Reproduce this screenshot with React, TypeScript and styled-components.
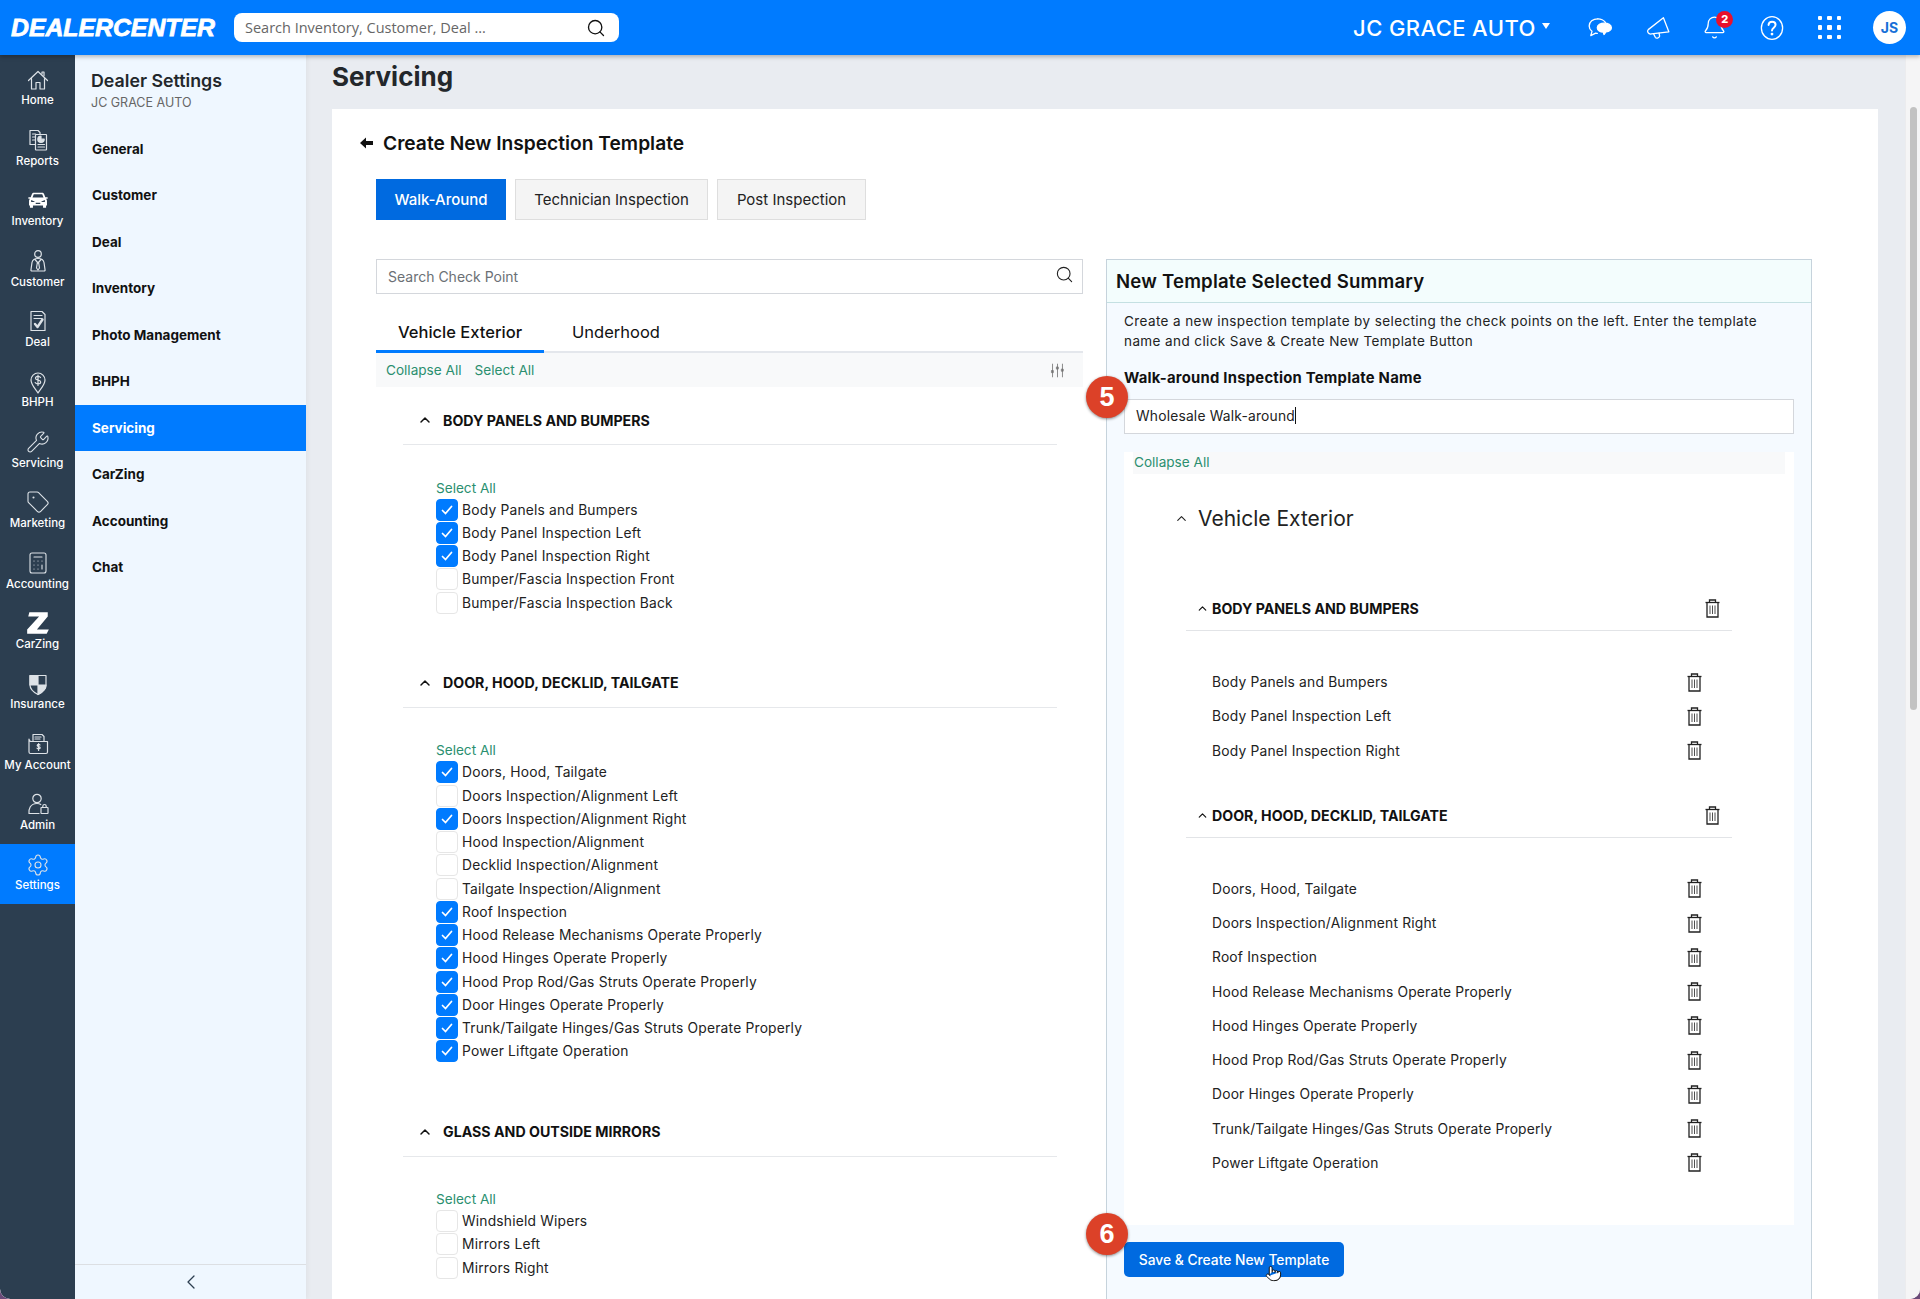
import React from "react";
import styled, { createGlobalStyle } from "styled-components";
import { Bell, Calculator, ChevronLeft, ChevronUp, Search, Settings, Tag, Wrench, Pointer } from "lucide-react";

const GlobalStyle = createGlobalStyle`
  html, body {
    margin: 0;
    padding: 0;
    background: #6b4a78;
  }
  * {
    box-sizing: border-box;
  }
  body {
    font-family: Inter, "Liberation Sans", sans-serif;
    color: #111;
  }
`;

const Shell = styled.div`
  width: 1920px;
  height: 1299px;
  display: flex;
  flex-direction: column;
  overflow: hidden;
  border-radius: 0 0 10px 10px;
  background: #e9ecf1;
`;

const TopBar = styled.header`
  height: 55px;
  flex: none;
  display: flex;
  align-items: center;
  padding: 0 14px 0 11px;
  background: #007bff;
  box-shadow: 0 2px 4px rgba(0, 0, 0, 0.25);
  position: relative;
  z-index: 2;
`;

const Logo = styled.div`
  width: 204px;
  font-family: "Liberation Sans", sans-serif;
  font-weight: 700;
  font-style: italic;
  font-size: 24.8px;
  color: #fff;
  -webkit-text-stroke: 0.8px #fff;
  white-space: nowrap;
`;

const GlobalSearch = styled.div`
  width: 385px;
  height: 29px;
  margin-left: 19px;
  display: flex;
  align-items: center;
  justify-content: space-between;
  padding: 0 13px 0 11px;
  border-radius: 8px;
  background: #fff;
  font-family: "Open Sans", sans-serif;
  font-size: 14.5px;
  color: #666;
`;

const Dealer = styled.div`
  margin-left: auto;
  display: flex;
  align-items: center;
  gap: 6px;
  font-size: 22px;
  font-weight: 500;
  letter-spacing: 0.4px;
  color: #fff;
  margin-right: 22px;
`;

const Caret = styled.span`
  width: 0;
  height: 0;
  border-left: 4.5px solid transparent;
  border-right: 4.5px solid transparent;
  border-top: 6px solid #fff;
  margin-bottom: 4px;
`;

const TopIcon = styled.div`
  width: 57.25px;
  height: 32px;
  display: flex;
  align-items: center;
  justify-content: center;
  position: relative;
  color: #fff;
`;

const NotifyBadge = styled.span`
  position: absolute;
  top: -1px;
  left: 30px;
  width: 17px;
  height: 17px;
  border-radius: 50%;
  background: #e8112d;
  color: #fff;
  font-size: 11px;
  font-weight: 800;
  display: flex;
  align-items: center;
  justify-content: center;
`;

const Dots = styled.div`
  display: grid;
  grid-template-columns: repeat(3, 4.5px);
  gap: 5px;
`;

const Dot = styled.i`
  width: 4.5px;
  height: 4.5px;
  border-radius: 1px;
  background: #fff;
`;

const Avatar = styled.div`
  width: 33px;
  height: 33px;
  margin-left: 15px;
  border-radius: 50%;
  background: #fff;
  color: #1670d8;
  font-size: 14px;
  font-weight: 700;
  display: flex;
  align-items: center;
  justify-content: center;
`;

const Body = styled.div`
  flex: 1;
  min-height: 0;
  display: flex;
`;

const Rail = styled.nav`
  width: 75px;
  flex: none;
  padding-top: 3.6px;
  background: #2c3e50;
  border-bottom-left-radius: 10px;
`;

const RailItem = styled.div<{ $active?: boolean }>`
  height: 60.4px;
  padding-top: 8px;
  display: flex;
  flex-direction: column;
  align-items: center;
  background: ${({ $active }) => ($active ? "#007bff" : "transparent")};
  color: #dde2e7;
`;

const RailIcon = styled.div`
  height: 26px;
  display: flex;
  align-items: center;
  justify-content: center;
`;

const RailLabel = styled.div`
  margin-top: 0.8px;
  font-size: 11.5px;
  font-weight: 500;
  line-height: 14.6px;
  color: #fff;
  white-space: nowrap;
`;

const SubNav = styled.aside`
  width: 231px;
  flex: none;
  display: flex;
  flex-direction: column;
  background: #eff7ff;
  box-shadow: 2px 0 4px rgba(0, 0, 0, 0.04);
`;

const SubHead = styled.div`
  height: 69px;
  padding: 15px 0 0 16px;
`;

const SubTitle = styled.div`
  font-size: 17.8px;
  font-weight: 600;
  line-height: 22px;
  color: #23272b;
`;

const SubCaption = styled.div`
  font-size: 12.5px;
  line-height: 22px;
  color: #666;
`;

const SubList = styled.div`
  flex: 1;
  padding-top: 1.5px;
`;

const SubItem = styled.div<{ $active?: boolean }>`
  height: 46.5px;
  display: flex;
  align-items: center;
  padding-left: 17px;
  font-size: 13.5px;
  font-weight: 700;
  color: ${({ $active }) => ($active ? "#fff" : "#111")};
  background: ${({ $active }) => ($active ? "#007bff" : "transparent")};
`;

const CollapseRow = styled.div`
  height: 35px;
  flex: none;
  display: flex;
  align-items: center;
  justify-content: center;
  border-top: 1px solid #dcdfe3;
  color: #2c3e50;
`;

const Main = styled.main`
  flex: 1;
  min-width: 0;
  padding-left: 26px;
`;

const PageTitle = styled.h1`
  height: 54px;
  margin: 0;
  font-size: 26px;
  font-weight: 700;
  line-height: 43px;
  color: #23272b;
`;

const Panel = styled.section`
  width: 1546px;
  height: 1190px;
  padding-top: 20px;
  background: #fff;
  overflow: hidden;
`;

const Heading = styled.div`
  height: 28px;
  padding-left: 28px;
  display: flex;
  align-items: center;
  gap: 10px;
  font-size: 19.2px;
  font-weight: 600;
  color: #111;
`;

const TemplateTabs = styled.div`
  display: flex;
  gap: 9px;
  margin: 22px 0 39px 44px;
`;

const TemplateTab = styled.div<{ $active?: boolean; $width: number }>`
  width: ${({ $width }) => $width}px;
  height: 41px;
  display: flex;
  align-items: center;
  justify-content: center;
  font-size: 15px;
  font-weight: ${({ $active }) => ($active ? 500 : 400)};
  color: ${({ $active }) => ($active ? "#fff" : "#222")};
  background: ${({ $active }) => ($active ? "#006ae0" : "#f4f4f4")};
  border: ${({ $active }) => ($active ? "none" : "1.5px solid #dedede")};
`;

const Columns = styled.div`
  display: grid;
  grid-template-columns: 707px 706px;
  column-gap: 23px;
  margin-left: 44px;
`;

const CheckSearch = styled.div`
  height: 35px;
  display: flex;
  align-items: center;
  justify-content: space-between;
  padding: 0 8px 0 11px;
  border: 1.5px solid #d4d7dc;
  font-size: 14px;
  color: #6b7075;
`;

const SearchGlyph = styled.span`
  display: flex;
  margin: 0 0 4px 0;
  color: #222;
`;

const SectionTabs = styled.div`
  height: 59px;
  display: flex;
  align-items: flex-end;
  gap: 6px;
  border-bottom: 2px solid #e4e7ec;
`;

const SectionTab = styled.div<{ $active?: boolean }>`
  height: 39px;
  margin-bottom: -2px;
  padding: 0 22px;
  display: flex;
  align-items: center;
  font-size: 16.5px;
  font-weight: ${({ $active }) => ($active ? 500 : 400)};
  border-bottom: 3px solid ${({ $active }) => ($active ? "#007bff" : "transparent")};
`;

const ToolBar = styled.div`
  height: 34px;
  display: flex;
  align-items: center;
  gap: 13px;
  padding: 0 17px 0 10px;
  background: #f8f9fa;
`;

const GreenLink = styled.span`
  font-size: 13.6px;
  color: #2b8f6f;
`;

const ToolEnd = styled.div`
  margin-left: auto;
  display: flex;
  color: #777;
`;

const Groups = styled.div`
  padding: 11px 26px 0 27px;
`;

const GroupHead = styled.div`
  height: 47px;
  padding: 0 0 2px 14px;
  display: flex;
  align-items: center;
  gap: 10px;
  border-bottom: 1.5px solid #e6e8eb;
  font-size: 14.2px;
  font-weight: 700;
  color: #111;
`;

const CheckList = styled.div`
  padding-left: 33px;
  padding-bottom: 46.5px;
`;

const SelectLine = styled.div`
  height: 21px;
  margin-top: 32px;
  display: flex;
  align-items: center;
`;

const CheckRow = styled.div`
  height: 23.25px;
  display: flex;
  align-items: center;
  gap: 4px;
  font-size: 13.8px;
  letter-spacing: 0.2px;
  color: #222;
`;

const CheckBox = styled.span<{ $checked: boolean }>`
  width: 22px;
  height: 22px;
  flex: none;
  display: flex;
  align-items: center;
  justify-content: center;
  border-radius: 4px;
  background: ${({ $checked }) => ($checked ? "#007bff" : "#fff")};
  border: 1px solid ${({ $checked }) => ($checked ? "#007bff" : "#e6e6e6")};
`;

const Summary = styled.div`
  height: 1060px;
  border: 1px solid #c6d3dc;
  border-bottom: none;
  background: #f5faff;
`;

const SummaryHead = styled.div`
  height: 43px;
  padding-left: 9px;
  display: flex;
  align-items: center;
  border-bottom: 1px solid #c4e0e2;
  background: #f3fdfd;
  font-size: 18.6px;
  font-weight: 600;
  letter-spacing: 0.2px;
  color: #111;
`;

const SummaryBody = styled.div`
  padding: 8px 17px 0;
`;

const Intro = styled.p`
  margin: 0;
  font-size: 13.5px;
  line-height: 20px;
  letter-spacing: 0.4px;
  white-space: nowrap;
  color: #222;
`;

const FieldLabel = styled.div`
  margin-top: 17px;
  font-size: 14.8px;
  font-weight: 700;
  letter-spacing: 0.25px;
  line-height: 20px;
  color: #111;
`;

const FieldWrap = styled.div`
  position: relative;
  margin-top: 11px;
`;

const NameField = styled.div`
  height: 35px;
  display: flex;
  align-items: center;
  padding: 0 0 2px 11px;
  border: 1.5px solid #d4d7dc;
  background: #fff;
  font-size: 13.8px;
  letter-spacing: 0.2px;
  color: #222;
`;

const TextCaret = styled.i`
  width: 1px;
  height: 17px;
  background: #111;
`;

const StepBadge = styled.div<{ $top: number }>`
  position: absolute;
  left: -38px;
  top: ${({ $top }) => $top}px;
  width: 42px;
  height: 42px;
  border-radius: 50%;
  display: flex;
  align-items: center;
  justify-content: center;
  background: #dc4128;
  box-shadow: 0 1px 3px rgba(0, 0, 0, 0.45);
  color: #fff;
  font-family: "Liberation Sans", sans-serif;
  font-size: 27px;
  font-weight: 700;
`;

const SelectedBox = styled.div`
  margin-top: 18px;
  padding-bottom: 45px;
  background: #fff;
`;

const CollapseBar = styled.div`
  height: 22px;
  margin: 0 9px;
  padding: 0 0 2px 1px;
  display: flex;
  align-items: center;
  background: #f8f9fa;
`;

const SectionName = styled.div`
  height: 30px;
  margin: 29px 0 55px;
  padding-left: 50px;
  display: flex;
  align-items: center;
  gap: 9px;
  font-size: 21px;
  color: #222;
`;

const SelectedGroup = styled.div`
  margin: 0 62px 27px;
  &:last-child {
    margin-bottom: 0;
  }
`;

const SelectedHead = styled.div`
  height: 43px;
  padding: 0 12px 1px 10px;
  display: flex;
  align-items: center;
  gap: 3px;
  border-bottom: 1.5px solid #e2e4e7;
  font-size: 14.2px;
  font-weight: 700;
  color: #111;
`;

const HeadTrash = styled.div`
  margin-left: auto;
  display: flex;
`;

const SelectedList = styled.div`
  margin-top: 34px;
`;

const SelectedRow = styled.div`
  height: 34.25px;
  padding: 0 30px 0 26px;
  display: flex;
  align-items: center;
  justify-content: space-between;
  font-size: 13.8px;
  letter-spacing: 0.2px;
  color: #222;
`;

const SaveWrap = styled.div`
  position: relative;
  margin-top: 17px;
  width: 220px;
`;

const SaveButton = styled.div`
  height: 35px;
  display: flex;
  align-items: center;
  justify-content: center;
  border-radius: 5px;
  background: #006ae0;
  color: #fff;
  font-size: 13.8px;
  font-weight: 500;
`;

const HandCursor = styled.div`
  position: absolute;
  left: 141px;
  top: 23px;
  display: flex;
  color: #111;
`;

const ScrollTrack = styled.div`
  width: 15px;
  flex: none;
  padding: 52px 3px 0 4px;
  background: #f5f5f6;
  border-left: 1px solid #ececee;
`;

const ScrollThumb = styled.div`
  height: 603px;
  border-radius: 4px;
  background: #c2c2c2;
`;

const Line = styled.svg.attrs({ viewBox: "0 0 24 24", fill: "none", stroke: "currentColor", strokeWidth: 1.2 })<{ $size?: number }>`
  width: ${({ $size }) => $size ?? 24}px;
  height: ${({ $size }) => $size ?? 24}px;
  stroke-linecap: round;
  stroke-linejoin: round;
`;

const HomeIcon = () => (
  <Line>
    <path d="M2.500 12.500 12 3.500l9.500 9" />
    <path d="M5.500 10.500V21H10v-6.500h4V21h4.500V10.500" />
    <path d="M16 6V4h2v3.800" />
  </Line>
);

const ReportsIcon = () => (
  <Line>
    <path d="M4 2.500h8l2 2v2M4 2.500v14h5" />
    <path d="M6.500 6h3M6.500 9h2.500M6.500 12h2.500" />
    <rect x="9.500" y="6.500" width="11" height="15.500" rx="0.500" />
    <path d="M15 8a3.200 3.200 0 1 0 3.200 3.200H15z" fill="currentColor" />
    <path d="M12 16.500h6.500M12 19h6.500" />
  </Line>
);

const CarIcon = () => (
  <svg width="22" height="22" viewBox="0 0 24 24" fill="#fff">
    <path
      fillRule="evenodd"
      d="M7.500 4h9c1 0 1.700.5 2.100 1.500L20 9h2.500v1.500h-1.800c.7.6 1.100 1.300 1.100 2.200V18h-1v2.500h-3.300V18H6.500v2.500H3.200V18h-1v-5.300c0-.9.4-1.600 1.100-2.200H1.500V9H4l1.400-3.500C5.800 4.500 6.500 4 7.500 4zM7.400 5.700 6 9.300h12l-1.400-3.600zM4.500 12v2.300h3.800V13.500zM19.500 12l-3.800 1.500v.8h3.800zM9.500 15v1.300h5V15z"
    />
  </svg>
);

const CustomerIcon = () => (
  <Line>
    <circle cx="12" cy="5" r="3.300" />
    <path d="M6 22c-1 0-1.200-.5-1-1.500l1-7c.5-2.500 2.500-4 6-4s5.500 1.500 6 4l1 7c.2 1-0 1.500-1 1.500z" />
    <path d="M9 10.500 12 14l3-3.500M11.300 14l-.8 5 1.500 2 1.500-2-.8-5" />
  </Line>
);

const DealIcon = () => (
  <Line>
    <path d="M5 2.500h11l3 3v16H5z" />
    <path d="M8 6.500h8M8 9.500h8" />
    <path d="m9 15 2.500 3 5-7.500" strokeWidth="2.400" />
  </Line>
);

const PinIcon = () => (
  <Line>
    <path d="M12 23c-2-3.500-7-8-7-13a7 7 0 0 1 14 0c0 5-5 9.500-7 13z" />
    <path d="M14.500 7.500c-.5-1-1.500-1.200-2.500-1.200-1.300 0-2.500.7-2.500 1.900 0 2.600 5.200 1.300 5.200 3.900 0 1.200-1.300 1.900-2.700 1.900-1.200 0-2.300-.4-2.800-1.400M12 5v10.500" />
  </Line>
);

const InsuranceIcon = () => (
  <Line>
    <path d="M4 3.500h16v9.500c0 4.500-4 7.500-8 9.500-4-2-8-5-8-9.500z" />
    <path d="M4 3.500h8V13H4z" fill="currentColor" />
    <path d="M12 13h8c0 4.500-4 7.500-8 9.500z" fill="currentColor" />
  </Line>
);

const ZIcon = () => (
  <svg width="26" height="26" viewBox="0 0 24 24" fill="#fff">
    <polygon points="4,2 21,2 21,6 11,18 22,18 20,22 2,22 2,18 13,6 3,6" />
  </svg>
);

const AccountIcon = () => (
  <Line>
    <path d="M7 8.500V2.500h9l2 2v4" />
    <path d="M9 5h6M9 7h5" />
    <path d="M3 7v13c0 1 .5 1.500 1.500 1.500H20c1 0 1.500-.5 1.500-1.500V9.500H5.500C4 9.500 3 8.500 3 7z" />
    <path d="M14 13c-.5-.8-2.800-.9-2.800.4 0 1.500 3 .9 3 2.400 0 1.300-2.500 1.200-3.200.3M12.600 11.500v7" />
  </Line>
);

const AdminIcon = () => (
  <Line>
    <circle cx="11" cy="6.500" r="4.200" />
    <path d="M3 21.500c-.5-4 1-10 8-10 1.500 0 2.800.3 3.800 1M3 21.500h10" />
    <rect x="15" y="15.500" width="7" height="6" rx="0.500" />
    <path d="M16.800 15.500v-1.300a1.700 1.700 0 0 1 3.400 0v1.300" />
  </Line>
);

const ChatIcon = () => (
  <Line $size={26}>
    <path d="M10 3.500c-4.500 0-8 2.800-8 6.700 0 2 1 3.700 2.600 4.900L3.500 19l4.500-2.200c.5.100 1 .2 1.500.2" />
    <path d="M10 3.500c3 0 5.500 1.300 7 3.300" />
    <path d="M16 7.500c-3.500 0-6.500 1.700-6.500 4.200 0 2.400 2.800 4.100 5.500 4.100l.7 2.200 1.800-2.400c2.700-.5 5-1.900 5-3.900 0-2.500-3-4.200-6.500-4.200z" fill="currentColor" />
  </Line>
);

const MegaphoneIcon = () => (
  <Line $size={26}>
    <path d="M3 13.500 17 2.500l5 13-16 2c-3 .5-4.500-2.500-3-4z" />
    <path d="M8 17.500l1.500 3c.8 1.500 3.500 1 4-1l-.5-2.800" />
  </Line>
);

const HelpIcon = () => (
  <Line $size={26}>
    <ellipse cx="12" cy="12" rx="9.800" ry="10.500" />
    <path d="M8.800 9.200c.2-2 1.600-3 3.300-3 1.800 0 3.200 1.200 3.200 2.900 0 2.500-3.300 2.700-3.300 5.200" strokeWidth="1.800" />
    <circle cx="12" cy="17.600" r="0.700" fill="currentColor" />
  </Line>
);

const SliderIcon = () => (
  <Line $size={17}>
    <path d="M5 3v18M12 3v18M19 3v18" />
    <rect x="4" y="12" width="2" height="3" fill="currentColor" />
    <rect x="11" y="7" width="2" height="3" fill="currentColor" />
    <rect x="18" y="10" width="2" height="3" fill="currentColor" />
  </Line>
);

const BackArrow = () => (
  <svg width="13" height="12" viewBox="0 0 13 12" fill="#111">
    <polygon points="0,6 6,0.500 6,4 13,4 13,8 6,8 6,11.500" />
  </svg>
);

const TrashIcon = () => (
  <svg width="15" height="19" viewBox="0 0 15 19" fill="none" stroke="#222" strokeWidth="1.300">
    <path d="M.5 3.500h14" />
    <path d="M4.500 3.500V1h6v2.500" />
    <path d="M2 3.500V18h11V3.500" />
    <path d="M5 6.500v8.500M7.500 6.500v8.500M10 6.500v8.500" strokeWidth="0.800" />
  </svg>
);

const TickIcon = () => (
  <svg width="14" height="14" viewBox="0 0 14 14" fill="none" stroke="#fff" strokeWidth="1.700" strokeLinecap="round">
    <path d="m2.500 7.500 3 3 6-7" />
  </svg>
);

const railItems = [
  { label: "Home", icon: <HomeIcon /> },
  { label: "Reports", icon: <ReportsIcon /> },
  { label: "Inventory", icon: <CarIcon /> },
  { label: "Customer", icon: <CustomerIcon /> },
  { label: "Deal", icon: <DealIcon /> },
  { label: "BHPH", icon: <PinIcon /> },
  { label: "Servicing", icon: <Wrench size={24} strokeWidth={1.1} /> },
  { label: "Marketing", icon: <Tag size={24} strokeWidth={1.1} /> },
  { label: "Accounting", icon: <Calculator size={24} strokeWidth={1.1} /> },
  { label: "CarZing", icon: <ZIcon /> },
  { label: "Insurance", icon: <InsuranceIcon /> },
  { label: "My Account", icon: <AccountIcon /> },
  { label: "Admin", icon: <AdminIcon /> },
  { label: "Settings", icon: <Settings size={24} strokeWidth={1.1} />, active: true },
];

const subItems = ["General", "Customer", "Deal", "Inventory", "Photo Management", "BHPH", "Servicing", "CarZing", "Accounting", "Chat"];

const checkGroups = [
  {
    title: "BODY PANELS AND BUMPERS",
    rows: [
      ["Body Panels and Bumpers", true],
      ["Body Panel Inspection Left", true],
      ["Body Panel Inspection Right", true],
      ["Bumper/Fascia Inspection Front", false],
      ["Bumper/Fascia Inspection Back", false],
    ],
  },
  {
    title: "DOOR, HOOD, DECKLID, TAILGATE",
    rows: [
      ["Doors, Hood, Tailgate", true],
      ["Doors Inspection/Alignment Left", false],
      ["Doors Inspection/Alignment Right", true],
      ["Hood Inspection/Alignment", false],
      ["Decklid Inspection/Alignment", false],
      ["Tailgate Inspection/Alignment", false],
      ["Roof Inspection", true],
      ["Hood Release Mechanisms Operate Properly", true],
      ["Hood Hinges Operate Properly", true],
      ["Hood Prop Rod/Gas Struts Operate Properly", true],
      ["Door Hinges Operate Properly", true],
      ["Trunk/Tailgate Hinges/Gas Struts Operate Properly", true],
      ["Power Liftgate Operation", true],
    ],
  },
  {
    title: "GLASS AND OUTSIDE MIRRORS",
    rows: [
      ["Windshield Wipers", false],
      ["Mirrors Left", false],
      ["Mirrors Right", false],
    ],
  },
] as { title: string; rows: [string, boolean][] }[];

const App = () => {
  return (
    <Shell>
      <GlobalStyle />
      <TopBar>
        <Logo>DEALERCENTER</Logo>
        <GlobalSearch>
          Search Inventory, Customer, Deal ...
          <Search size={20} color="#111" strokeWidth={1.6} />
        </GlobalSearch>
        <Dealer>
          JC GRACE AUTO
          <Caret />
        </Dealer>
        <TopIcon><ChatIcon /></TopIcon>
        <TopIcon><MegaphoneIcon /></TopIcon>
        <TopIcon>
          <Bell size={25} strokeWidth={1.2} />
          <NotifyBadge>2</NotifyBadge>
        </TopIcon>
        <TopIcon><HelpIcon /></TopIcon>
        <TopIcon>
          <Dots>
            {Array.from({ length: 9 }, (_, i) => <Dot key={i} />)}
          </Dots>
        </TopIcon>
        <Avatar>JS</Avatar>
      </TopBar>
      <Body>
        <Rail>
          {railItems.map((item) => (
            <RailItem key={item.label} $active={item.active}>
              <RailIcon>{item.icon}</RailIcon>
              <RailLabel>{item.label}</RailLabel>
            </RailItem>
          ))}
        </Rail>
        <SubNav>
          <SubHead>
            <SubTitle>Dealer Settings</SubTitle>
            <SubCaption>JC GRACE AUTO</SubCaption>
          </SubHead>
          <SubList>
            {subItems.map((name) => (
              <SubItem key={name} $active={name === "Servicing"}>{name}</SubItem>
            ))}
          </SubList>
          <CollapseRow>
            <ChevronLeft size={24} strokeWidth={1.3} />
          </CollapseRow>
        </SubNav>
        <Main>
          <PageTitle>Servicing</PageTitle>
          <Panel>
            <Heading>
              <BackArrow />
              Create New Inspection Template
            </Heading>
            <TemplateTabs>
              <TemplateTab $active $width={130}>Walk-Around</TemplateTab>
              <TemplateTab $width={193}>Technician Inspection</TemplateTab>
              <TemplateTab $width={149}>Post Inspection</TemplateTab>
            </TemplateTabs>
            <Columns>
              <div>
                <CheckSearch>
                  Search Check Point
                  <SearchGlyph><Search size={19} strokeWidth={1.4} /></SearchGlyph>
                </CheckSearch>
                <SectionTabs>
                  <SectionTab $active>Vehicle Exterior</SectionTab>
                  <SectionTab>Underhood</SectionTab>
                </SectionTabs>
                <ToolBar>
                  <GreenLink>Collapse All</GreenLink>
                  <GreenLink>Select All</GreenLink>
                  <ToolEnd><SliderIcon /></ToolEnd>
                </ToolBar>
                <Groups>
                  {checkGroups.map((group) => (
                    <div key={group.title}>
                      <GroupHead>
                        <ChevronUp size={16} strokeWidth={2.2} />
                        {group.title}
                      </GroupHead>
                      <CheckList>
                        <SelectLine><GreenLink>Select All</GreenLink></SelectLine>
                        {group.rows.map(([name, checked]) => (
                          <CheckRow key={name}>
                            <CheckBox $checked={checked}>{checked && <TickIcon />}</CheckBox>
                            {name}
                          </CheckRow>
                        ))}
                      </CheckList>
                    </div>
                  ))}
                </Groups>
              </div>
              <Summary>
                <SummaryHead>New Template Selected Summary</SummaryHead>
                <SummaryBody>
                  <Intro>
                    Create a new inspection template by selecting the check points on the left. Enter the template
                    <br />
                    name and click Save &amp; Create New Template Button
                  </Intro>
                  <FieldLabel>Walk-around Inspection Template Name</FieldLabel>
                  <FieldWrap>
                    <StepBadge $top={-23}>5</StepBadge>
                    <NameField>
                      Wholesale Walk-around
                      <TextCaret />
                    </NameField>
                  </FieldWrap>
                  <SelectedBox>
                    <CollapseBar><GreenLink>Collapse All</GreenLink></CollapseBar>
                    <SectionName>
                      <ChevronUp size={15} strokeWidth={1.8} />
                      Vehicle Exterior
                    </SectionName>
                    {checkGroups.slice(0, 2).map((group) => (
                      <SelectedGroup key={group.title}>
                        <SelectedHead>
                          <ChevronUp size={13} strokeWidth={2.2} />
                          {group.title}
                          <HeadTrash><TrashIcon /></HeadTrash>
                        </SelectedHead>
                        <SelectedList>
                          {group.rows.filter(([, checked]) => checked).map(([name]) => (
                            <SelectedRow key={name}>
                              {name}
                              <TrashIcon />
                            </SelectedRow>
                          ))}
                        </SelectedList>
                      </SelectedGroup>
                    ))}
                  </SelectedBox>
                  <SaveWrap>
                    <StepBadge $top={-29}>6</StepBadge>
                    <SaveButton>Save &amp; Create New Template</SaveButton>
                    <HandCursor><Pointer size={17} fill="#fff" strokeWidth={1.4} /></HandCursor>
                  </SaveWrap>
                </SummaryBody>
              </Summary>
            </Columns>
          </Panel>
        </Main>
        <ScrollTrack><ScrollThumb /></ScrollTrack>
      </Body>
    </Shell>
  );
};

export default App;
